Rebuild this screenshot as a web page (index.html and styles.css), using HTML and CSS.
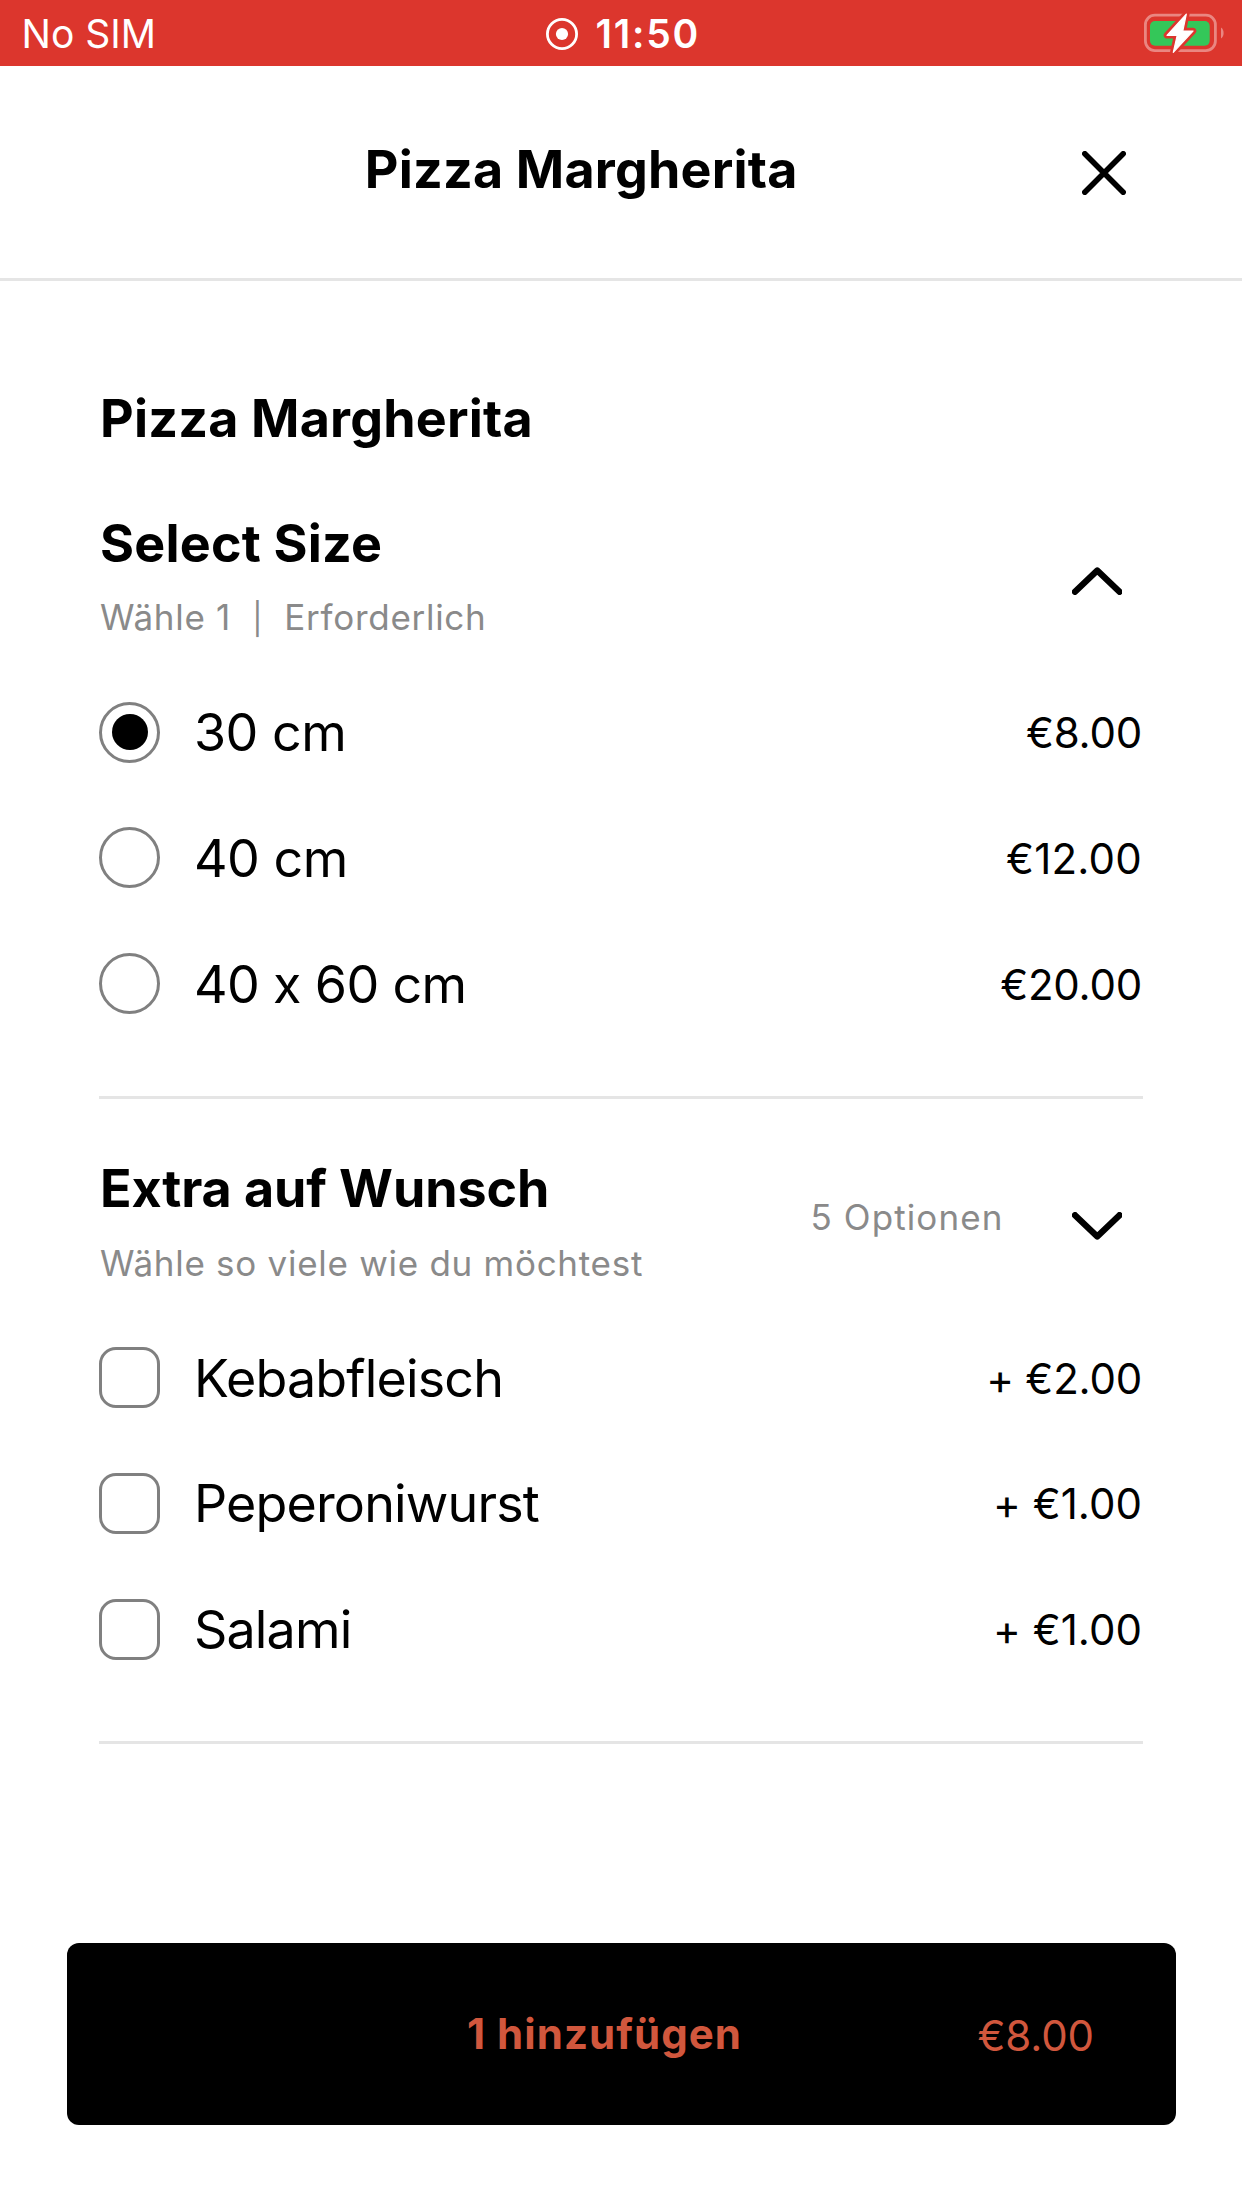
FILE: index.html
```html
<!DOCTYPE html>
<html lang="de">
<head>
<meta charset="utf-8">
<title>Pizza Margherita</title>
<link rel="stylesheet" href="styles.css">
</head>
<body>
<div class="status">
  <span class="carrier">No SIM</span>
  <div class="clock">
    <svg class="record" viewBox="0 0 32 32" fill="none"><circle cx="16" cy="16" r="14.6" stroke="#fff" stroke-width="2.8"/><circle cx="16" cy="16" r="6.1" fill="#fff"/></svg>
    <span class="time">11:50</span>
  </div>
  <svg class="battery" viewBox="0 0 80 40" fill="none">
    <rect x="1.4" y="2.2" width="70" height="35.4" rx="9.5" stroke="#fff" stroke-opacity=".4" stroke-width="2.8"/>
    <path d="M77 14.5c1.7 1.2 2.6 3.200 2.600 5.500s-.9 4.300-2.600 5.500z" fill="#fff" fill-opacity=".4"/>
    <rect x="6" y="8" width="59.700" height="24.700" rx="5" fill="#34c759"/>
    <path d="M42.300 1.200 23 22.300H33.200L29.300 39.300 49 18H38.800Z" fill="#fff" stroke="#dc362d" stroke-width="6.500" stroke-linejoin="round"/>
    <path d="M42.300 1.200 23 22.300H33.200L29.300 39.300 49 18H38.800Z" fill="#fff" stroke="#fff" stroke-width="1.200" stroke-linejoin="round"/>
  </svg>
</div>

<header class="header">
  <h1 class="header-title">Pizza Margherita</h1>
  <button class="close" aria-label="Schließen">
    <svg viewBox="0 0 44 44" fill="none"><path d="M2.800 2.800 41.200 41.200M41.200 2.800 2.800 41.200" stroke="#000" stroke-width="5.600" stroke-linecap="round"/></svg>
  </button>
</header>

<main class="content">
  <h2 class="product">Pizza Margherita</h2>

  <section class="group">
    <div class="group-head">
      <div class="group-text">
        <h3 class="group-title">Select Size</h3>
        <p class="group-hint">Wähle 1&nbsp; <span class="bar">|</span>&nbsp; Erforderlich</p>
      </div>
      <svg class="chevron chevron-up" viewBox="0 0 50.500 28" fill="none"><path d="M3 24.800 25.250 3.500 47.500 24.800" stroke="#000" stroke-width="6.400" stroke-linecap="round" stroke-linejoin="round"/></svg>
    </div>
    <label class="option"><span class="radio radio-on"></span><span class="name">30 cm</span><span class="price">€8.00</span></label>
    <label class="option"><span class="radio"></span><span class="name">40 cm</span><span class="price price-wide">€12.00</span></label>
    <label class="option"><span class="radio"></span><span class="name name-snug">40 x 60 cm</span><span class="price">€20.00</span></label>
  </section>

  <section class="group">
    <div class="group-head">
      <div class="group-text">
        <h3 class="group-title title-snug">Extra auf Wunsch</h3>
        <p class="group-hint">Wähle so viele wie du möchtest</p>
      </div>
      <span class="count">5 Optionen</span>
      <svg class="chevron chevron-down" viewBox="0 0 50.500 28" fill="none"><path d="M3 3.200 25.250 24.500 47.500 3.200" stroke="#000" stroke-width="6.400" stroke-linecap="round" stroke-linejoin="round"/></svg>
    </div>
    <label class="option"><span class="check"></span><span class="name name-tight">Kebabfleisch</span><span class="price">+ €2.00</span></label>
    <label class="option"><span class="check"></span><span class="name name-tight">Peperoniwurst</span><span class="price price-plus">+ €1.00</span></label>
    <label class="option"><span class="check"></span><span class="name name-tight">Salami</span><span class="price price-plus">+ €1.00</span></label>
  </section>
</main>

<button class="add">
  <span class="add-label">1 hinzufügen</span>
  <span class="add-price">€8.00</span>
</button>
</body>
</html>
```
FILE: styles.css
```css
* { box-sizing: border-box; }

body {
  margin: 0;
  min-height: 2208px;
  background: #fff;
  color: #000;
  font-family: Inter, "Liberation Sans", sans-serif;
}

h1, h2, h3, p { margin: 0; }
button { border: 0; padding: 0; background: none; font-family: inherit; }
svg { display: block; flex: none; }

/* Status bar */
.status {
  display: grid;
  grid-template-columns: 1fr auto 1fr;
  align-items: center;
  height: 66px;
  padding: 2px 18px 0 21.500px;
  background: #dc362d;
  color: #fff;
  font-size: 39px;
  line-height: 64px;
}
.carrier { letter-spacing: 0; }
.clock { display: flex; align-items: center; gap: 17px; padding-left: 1px; }
.record { width: 32px; height: 32px; }
.time { font-weight: 600; letter-spacing: 1.800px; }
.battery { width: 80px; height: 40px; justify-self: end; margin-top: -3px; }

/* Title bar */
.header {
  display: flex;
  align-items: center;
  height: 215px;
  padding: 0 116px 0 80.500px;
  border-bottom: 3px solid #e5e5e5;
}
.header-title {
  flex: 1;
  padding-bottom: 3.500px;
  font-size: 52px;
  font-weight: 700;
  line-height: 62px;
  letter-spacing: .2px;
  text-align: center;
}
.close { width: 44px; height: 44px; margin-top: 2px; }

/* Product options */
.content { padding: 107px 99px 0; }
.product, .group-title {
  font-size: 52px;
  font-weight: 700;
  line-height: 62px;
  letter-spacing: .2px;
}
.product { padding-left: 1px; }
.group-title.title-snug { letter-spacing: -.1px; }

.group {
  height: 645.500px;
  padding-top: 59.700px;
  border-bottom: 3px solid #e5e5e5;
}
.product + .group { margin-top: 3px; }
.group-head {
  display: flex;
  align-items: flex-start;
  height: 156.600px;
  padding-right: 21px;
}
.group-text { flex: 1; padding-left: 1px; }
.group-hint, .count {
  color: #8a8a8a;
  font-size: 35px;
  line-height: 44px;
  letter-spacing: .720px;
}
.group-hint { margin-top: 20.500px; }
.bar { font-size: 31px; }
.count { margin: 36.500px 68px 0 0; letter-spacing: 1.100px; }
.chevron { width: 50.500px; height: 28px; }
.chevron-up { margin-top: 54.500px; }
.chevron-down { margin-top: 54px; }

.option {
  display: flex;
  align-items: center;
  height: 125.750px;
}
.radio, .check {
  display: grid;
  place-items: center;
  flex: none;
  width: 61px;
  height: 61px;
  margin-right: 34px;
  border: 3px solid #808080;
}
.radio { border-radius: 50%; }
.radio-on::after {
  content: "";
  width: 36px;
  height: 36px;
  border-radius: 50%;
  background: #000;
}
.check { border-radius: 17px; }
.name {
  flex: 1;
  padding-top: 2px;
  font-size: 52px;
  line-height: 62px;
  letter-spacing: -.5px;
}
.name-snug { letter-spacing: -.65px; }
.name-tight { letter-spacing: -.85px; }
.price {
  padding: 2px 1px 0 0;
  font-size: 42px;
  line-height: 50px;
  letter-spacing: -.2px;
}
.price-wide { letter-spacing: .2px; }
.price-plus { letter-spacing: .050px; }

/* Add to cart */
.add {
  display: flex;
  align-items: center;
  width: 1109px;
  height: 182px;
  margin: 199px 0 0 66.500px;
  padding: 0 81.500px 0 165px;
  border-radius: 12px;
  background: #000;
  color: #d1573d;
  font-size: 42px;
  line-height: 50px;
}
.add-label { flex: 1; font-weight: 700; letter-spacing: 1.050px; text-align: center; }
.add-price { padding-top: 3px; letter-spacing: -.1px; }
```
